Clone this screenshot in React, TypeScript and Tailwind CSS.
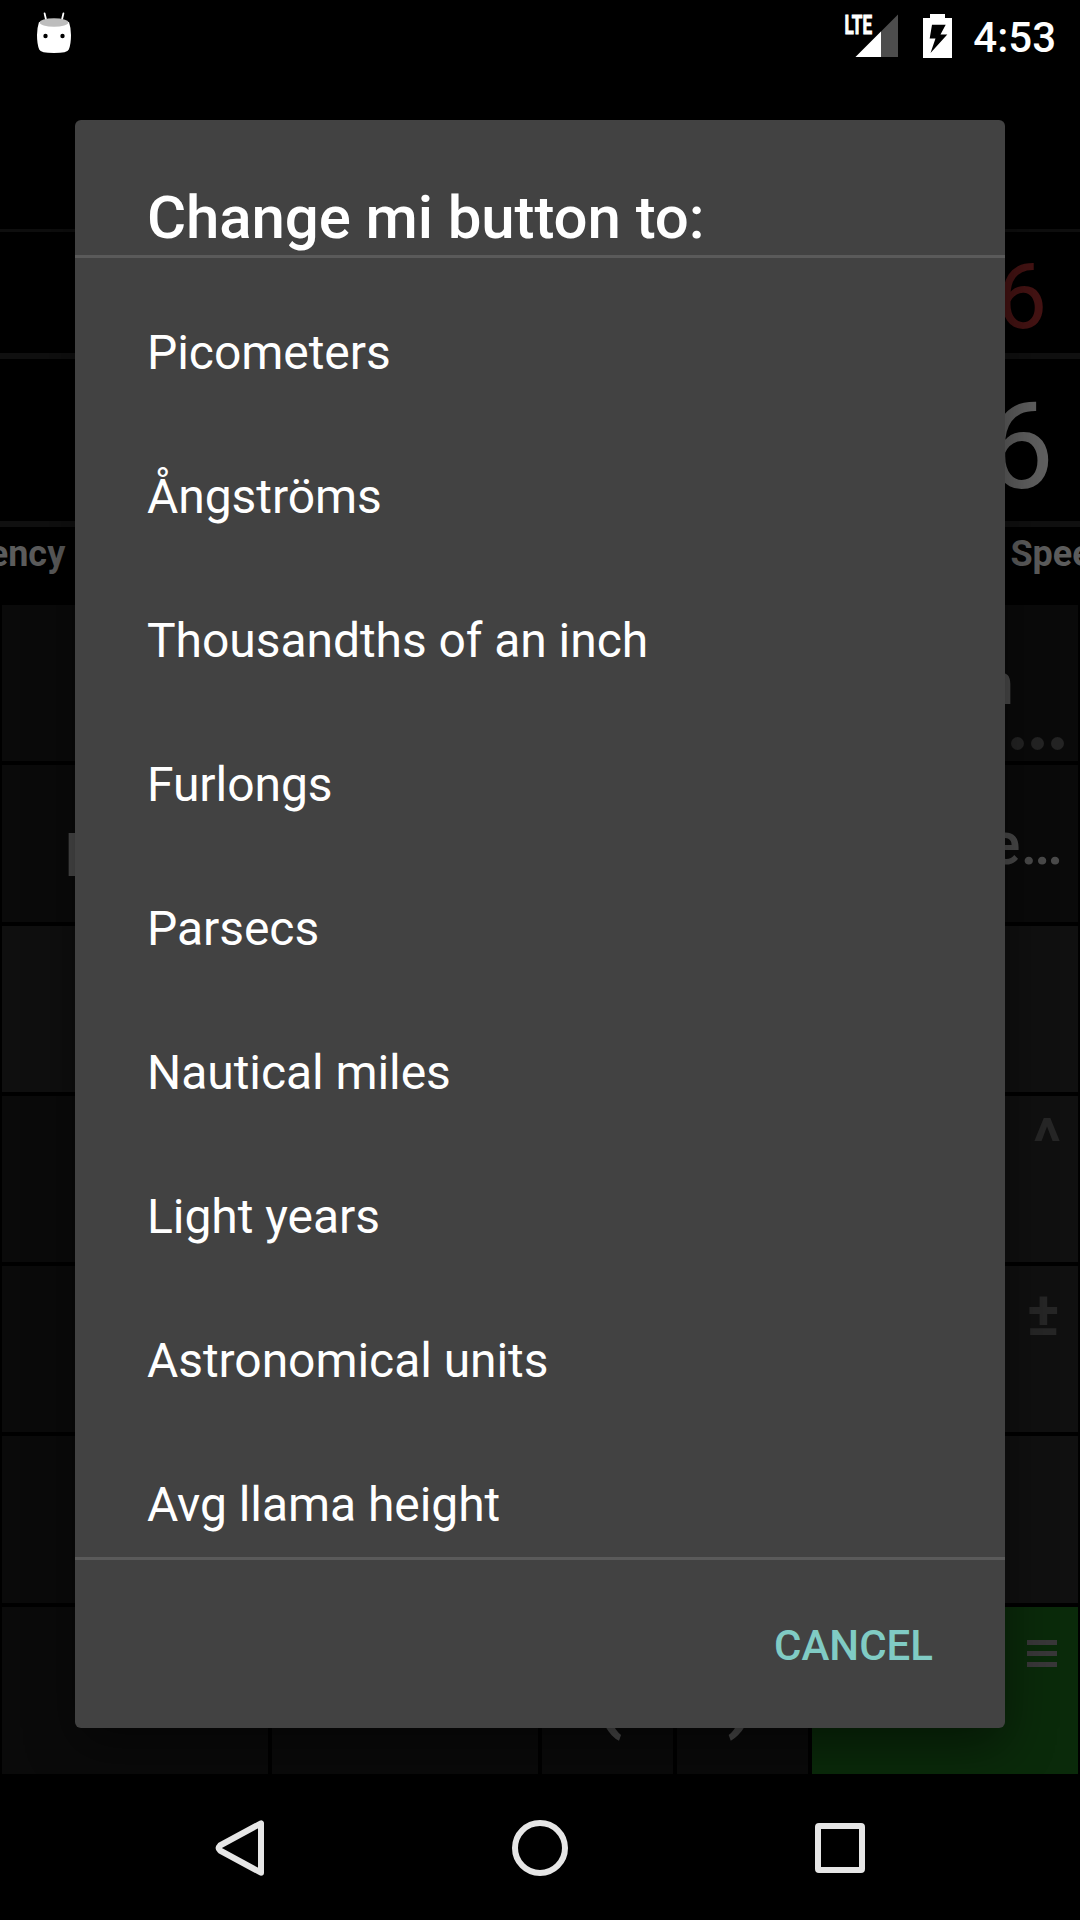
import type { ReactNode } from "react";

const units = [
  "Picometers",
  "Ångströms",
  "Thousandths of an inch",
  "Furlongs",
  "Parsecs",
  "Nautical miles",
  "Light years",
  "Astronomical units",
  "Avg llama height",
];

function Marshmallow() {
  return (
    <svg width="36" height="42" viewBox="36 12 36 42" className="block">
      <path d="M44.6 13.5 L46.6 22 M63.4 13.5 L61.4 22" stroke="#fff" strokeWidth="1.8" strokeLinecap="round" />
      <path d="M39 22 Q37 28 37 35 Q37 44 39.2 49.5 Q40.5 53 54 53 Q67.500 53 68.800 49.500 Q71 44 71 35 Q71 28 69 22 Z" fill="#fff" />
      <ellipse cx="54" cy="22.500" rx="14.500" ry="4.200" fill="#bdbdbd" />
      <circle cx="45.500" cy="36" r="2.200" fill="#000" />
      <circle cx="62.500" cy="36" r="2.200" fill="#000" />
    </svg>
  );
}

function Signal() {
  return (
    <svg width="56" height="44" viewBox="843 14 56 44" className="block overflow-visible">
      <path d="M898 14.500 V57 H855.500 Z" fill="#4d4d4d" />
      <path d="M881 31.500 V57 H855.500 Z" fill="#fff" />
      <text x="844.500" y="33.500" textLength="27.500" lengthAdjust="spacingAndGlyphs" fill="#fff" stroke="#fff" strokeWidth="0.900" className="font-['Roboto'] text-[25px] font-bold">LTE</text>
    </svg>
  );
}

function Battery() {
  return (
    <svg width="29" height="44" viewBox="923 14 29 44" className="block">
      <path d="M930 14 H945 V18 H952 V58 H923 V18 H930 Z" fill="#fff" />
      <path d="M932 24.700 H945.700 L940.500 34.500 H947.300 L930.500 53 L935.500 38.500 H929.700 Z" fill="#000" />
    </svg>
  );
}

function Key({ className = "bg-[#0a0a0a]", children }: { className?: string; children?: ReactNode }) {
  return <div className={`relative ${className}`}>{children}</div>;
}

export default function App() {
  return (
    <div className="relative h-[1920px] w-[1080px] overflow-hidden bg-black font-['Roboto',sans-serif] text-white">
      <header className="flex h-[72px] justify-between pt-[12px] pr-[24px] pl-[36px]">
        <Marshmallow />
        <div className="flex pt-[2px]">
          <Signal />
          <div className="ml-[24px]"><Battery /></div>
          <span className="ml-[21px] h-[44px] text-[42px] leading-[47px] font-medium">4:53</span>
        </div>
      </header>

      <main className="h-[1704px]">
        <div className="h-[157px]" />
        <div className="h-[3px] bg-[#0e0e0e]" />
        <div className="flex h-[121px] justify-end pr-[33px] text-[90px] leading-[132px] text-[#451313]">6</div>
        <div className="h-[6px] bg-[#101010]" />
        <div className="flex h-[162px] justify-end pr-[26px] text-[120px] leading-[177px] text-[#606060]">6</div>
        <div className="h-[6px] bg-[#101010]" />
        <div className="flex h-[78px] justify-between text-[36px] leading-[54px] font-bold whitespace-nowrap text-[#5c5c5c]">
          <span className="-ml-[81px]">Currency</span>
          <span className="-mr-[32px]">Speed</span>
        </div>
        <div className="grid grid-rows-[156px_157px_166px_166px_166px_167px_167px] gap-y-[4px] px-[2px]">
          <div className="grid grid-cols-4 gap-x-[4px]">
            <Key /><Key /><Key />
            <Key className="bg-[#0a0a0a] text-[#4a4a4a]">
              <span className="absolute top-[36px] right-[64px] text-[60px] leading-[86px] font-medium">in</span>
              <span className="absolute right-[14px] bottom-[11px] flex gap-[7px]">
                <i className="h-[13px] w-[13px] rounded-full bg-[#242424]" />
                <i className="h-[13px] w-[13px] rounded-full bg-[#242424]" />
                <i className="h-[13px] w-[13px] rounded-full bg-[#242424]" />
              </span>
            </Key>
          </div>
          <div className="grid grid-cols-4 gap-x-[4px] text-[#4a4a4a]">
            <Key className="h-[157px] bg-[#0a0a0a] pl-[63px] text-[60px] leading-[157px] font-medium">point</Key>
            <Key /><Key />
            <Key>
              <span className="absolute right-[15px] text-[60px] leading-[157px] font-medium">mile…</span>
            </Key>
          </div>
          <div className="grid grid-cols-4 gap-x-[4px]"><Key className="bg-[#0f0f0f]" /><Key /><Key /><Key className="bg-[#101010]" /></div>
          <div className="grid grid-cols-4 gap-x-[4px]">
            <Key /><Key /><Key />
            <Key className="bg-[#101010]">
              <span className="absolute top-[14px] right-[17px] text-[64px] leading-[66px] font-bold text-[#262626]">^</span>
            </Key>
          </div>
          <div className="grid grid-cols-4 gap-x-[4px]">
            <Key /><Key /><Key />
            <Key className="bg-[#101010]">
              <span className="absolute top-[16px] right-[18px] text-[62px] leading-[64px] font-bold text-[#262626]">±</span>
            </Key>
          </div>
          <div className="grid grid-cols-4 gap-x-[4px]"><Key /><Key /><Key /><Key className="bg-[#101010]" /></div>
          <div className="grid grid-cols-[266px_266px_131px_131px_266px] gap-x-[4px]">
            <Key /><Key />
            <Key className="h-[167px] bg-[#0a0a0a] text-center text-[88px] leading-[167px] font-medium text-[#4a4a4a]">(</Key>
            <Key className="h-[167px] bg-[#0a0a0a] text-center text-[88px] leading-[167px] font-medium text-[#4a4a4a]">)</Key>
            <div className="relative bg-[#0a2a0a]">
              <span className="absolute top-[33px] right-[21px] flex flex-col gap-[6px]">
                <i className="h-[5px] w-[30px] bg-[#393739]" />
                <i className="h-[5px] w-[30px] bg-[#393739]" />
                <i className="h-[5px] w-[30px] bg-[#393739]" />
              </span>
            </div>
          </div>
        </div>
      </main>

      <nav className="flex h-[144px] items-center justify-center">
        <svg width="660" height="60" viewBox="210 1818 660 60" fill="none" stroke="#e6e6e6" strokeWidth="6" strokeLinejoin="round">
          <path d="M261 1823.300 V1872.700 L220 1850.500 Q217.500 1848 220 1845.500 Z" />
          <circle cx="540" cy="1848" r="25" />
          <rect x="818" y="1826" width="44" height="44" rx="1" />
        </svg>
      </nav>

      <section role="dialog" className="absolute top-[120px] left-[75px] flex h-[1608px] w-[930px] flex-col rounded-[6px] bg-[#424242] shadow-[0_18px_50px_rgba(0,0,0,0.45)]">
        <h1 className="h-[135px] px-[72px] pt-[62px] text-[60px] leading-[71px] font-medium tracking-[-0.11px]">Change mi button to:</h1>
        <div className="h-[3px] bg-[#5a5a5a]" />
        <ul className="h-[1299px] overflow-hidden pt-[22px]">
          {units.map((unit) => (
            <li key={unit} className="h-[144px] px-[72px] pt-[44px] text-[48px] leading-[57px] tracking-[-0.06px]">{unit}</li>
          ))}
        </ul>
        <div className="h-[3px] bg-[#5a5a5a]" />
        <footer className="flex h-[168px] justify-end pt-[61px] pr-[72px]">
          <button className="h-[49px] text-[42px] leading-[49px] font-medium text-[#80cbc4]">CANCEL</button>
        </footer>
      </section>
    </div>
  );
}
